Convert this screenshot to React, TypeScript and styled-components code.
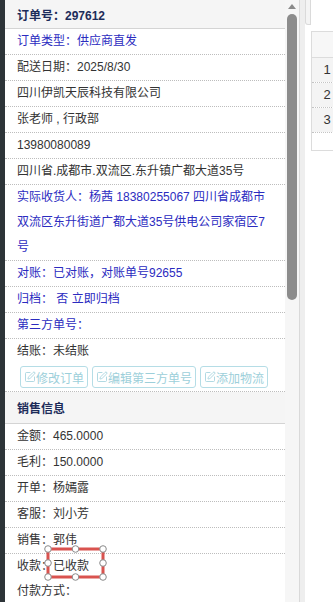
import styled, { createGlobalStyle } from 'styled-components';
import { SquarePen } from 'lucide-react';

const GlobalStyle = createGlobalStyle`
  html, body {
    margin: 0;
    padding: 0;
  }
  body {
    font-family: "Liberation Sans", "Noto Sans CJK SC", sans-serif;
    font-size: 12px;
    color: #333;
    background: #fff;
  }
`;

const Screen = styled.div`
  display: flex;
  width: 333px;
  height: 602px;
  overflow: hidden;
`;

const SideEdge = styled.div`
  width: 5px;
  flex: none;
  background: #2d3438;
`;

const Panel = styled.div`
  position: relative;
  width: 280px;
  flex: none;
  background: #fff;
  overflow: hidden;
`;

const SectionHead = styled.div<{ $h: number }>`
  height: ${(p) => p.$h}px;
  box-sizing: border-box;
  display: flex;
  align-items: center;
  padding: 0 12px;
  background: #f5f5f5;
  border-bottom: 1px solid #d4d4d4;
  color: #1d2c5a;
  font-weight: bold;
`;

const Row = styled.div<{ $blue?: boolean; $plain?: boolean }>`
  padding: 0 12px;
  line-height: 25px;
  color: ${(p) => (p.$blue ? '#2b2bbf' : '#333')};
  border-bottom: ${(p) => (p.$plain ? 'none' : '1px dotted #bdbdbd')};
`;

const ActionRow = styled.div`
  display: flex;
  gap: 4px;
  padding: 2px 12px 3px 15px;
  border-bottom: 1px dotted #bdbdbd;
`;

const ActionButton = styled.button`
  display: flex;
  align-items: center;
  height: 22px;
  box-sizing: border-box;
  padding: 0 3px;
  border: 1px solid #b5dde6;
  border-radius: 3px;
  background: #fff;
  color: #9dcfda;
  font: inherit;
  font-size: 12px;
  cursor: default;

  svg {
    width: 12px;
    height: 12px;
    flex: none;
  }
`;

const Annotation = styled.svg`
  position: absolute;
  left: 38px;
  top: 544px;
  width: 70px;
  height: 38px;
  overflow: visible;
`;

const ScrollTrack = styled.div`
  width: 14px;
  flex: none;
  background: #f6f6f6;
  display: flex;
  flex-direction: column;
  align-items: center;
`;

const ScrollArrow = styled.div`
  margin-top: 4px;
  width: 0;
  height: 0;
  border-left: 4px solid transparent;
  border-right: 4px solid transparent;
  border-bottom: 5px solid #8a8a8a;
`;

const ScrollThumb = styled.div`
  margin-top: 5px;
  width: 10px;
  height: 286px;
  border-radius: 5px;
  background: #8c8c8c;
`;

const RightPane = styled.div`
  flex: 1;
  display: flex;
  background: #fff;
  overflow: hidden;
`;

const Gutter = styled.div`
  width: 5px;
  flex: none;
  background: #eeeeee;
  border-left: 1px solid #d9d9d9;
`;

const RightContent = styled.div`
  flex: 1;
  display: flex;
  flex-direction: column;
  overflow: hidden;
`;

const TabBar = styled.div`
  height: 25px;
  display: flex;
`;

const TabStub = styled.div`
  width: 6px;
  height: 25px;
  box-sizing: border-box;
  background: #f4f4f4;
  border: 1px solid #dadada;
  border-top: none;
  border-radius: 0 0 0 3px;
`;

const MiniTable = styled.div`
  margin: 6px 0 0 6px;
  width: 200px;
  border: 1px solid #dcdcdc;
`;

const MiniHead = styled.div`
  height: 25px;
  background: #f7f7f7;
  border-bottom: 1px solid #dcdcdc;
`;

const MiniRow = styled.div<{ $empty?: boolean }>`
  height: ${(p) => (p.$empty ? 17 : 24)}px;
  border-bottom: ${(p) => (p.$empty ? 'none' : '1px dotted #c4c4c4')};
  display: flex;
`;

const IndexCell = styled.div`
  width: 30px;
  background: #f4f4f4;
  text-align: center;
  line-height: 24px;
  font-size: 13px;
  color: #333;
`;

const handles: [number, number][] = [
  [5, 5], [32.5, 5], [60, 5],
  [5, 19], [60, 19],
  [5, 33], [32.5, 33], [60, 33],
];

export default function App() {
  return (
    <Screen>
      <GlobalStyle />
      <SideEdge />
      <Panel>
        <SectionHead $h={29}>订单号：297612</SectionHead>
        <Row $blue>订单类型：供应商直发</Row>
        <Row>配送日期：2025/8/30</Row>
        <Row>四川伊凯天辰科技有限公司</Row>
        <Row>张老师 , 行政部</Row>
        <Row>13980080089</Row>
        <Row>四川省.成都市.双流区.东升镇广都大道35号</Row>
        <Row $blue>实际收货人：杨茜 18380255067 四川省成都市双流区东升街道广都大道35号供电公司家宿区7号</Row>
        <Row $blue>对账：已对账，对账单号92655</Row>
        <Row $blue>归档： 否 立即归档</Row>
        <Row $blue>第三方单号：</Row>
        <Row $plain>结账：未结账</Row>
        <ActionRow>
          <ActionButton><SquarePen strokeWidth={1.6} />修改订单</ActionButton>
          <ActionButton><SquarePen strokeWidth={1.6} />编辑第三方单号</ActionButton>
          <ActionButton><SquarePen strokeWidth={1.6} />添加物流</ActionButton>
        </ActionRow>
        <SectionHead $h={32}>销售信息</SectionHead>
        <Row>金额：465.0000</Row>
        <Row>毛利：150.0000</Row>
        <Row>开单：杨嫣露</Row>
        <Row>客服：刘小芳</Row>
        <Row>销售：郭伟</Row>
        <Row $plain>收款：已收款</Row>
        <Row $plain>付款方式：</Row>
        <Annotation viewBox="0 0 70 38">
          <rect x="5" y="5" width="55" height="28" fill="none" stroke="#d9534f" strokeWidth="3" />
          {handles.map(([cx, cy], i) => (
            <circle key={i} cx={cx} cy={cy} r="3.3" fill="#fff" stroke="#8a8a8a" strokeWidth="1" />
          ))}
        </Annotation>
      </Panel>
      <ScrollTrack>
        <ScrollArrow />
        <ScrollThumb />
      </ScrollTrack>
      <RightPane>
        <Gutter />
        <RightContent>
          <TabBar>
            <TabStub />
          </TabBar>
          <MiniTable>
            <MiniHead />
            {[1, 2, 3].map((n) => (
              <MiniRow key={n}>
                <IndexCell>{n}</IndexCell>
              </MiniRow>
            ))}
            <MiniRow $empty />
          </MiniTable>
        </RightContent>
      </RightPane>
    </Screen>
  );
}
